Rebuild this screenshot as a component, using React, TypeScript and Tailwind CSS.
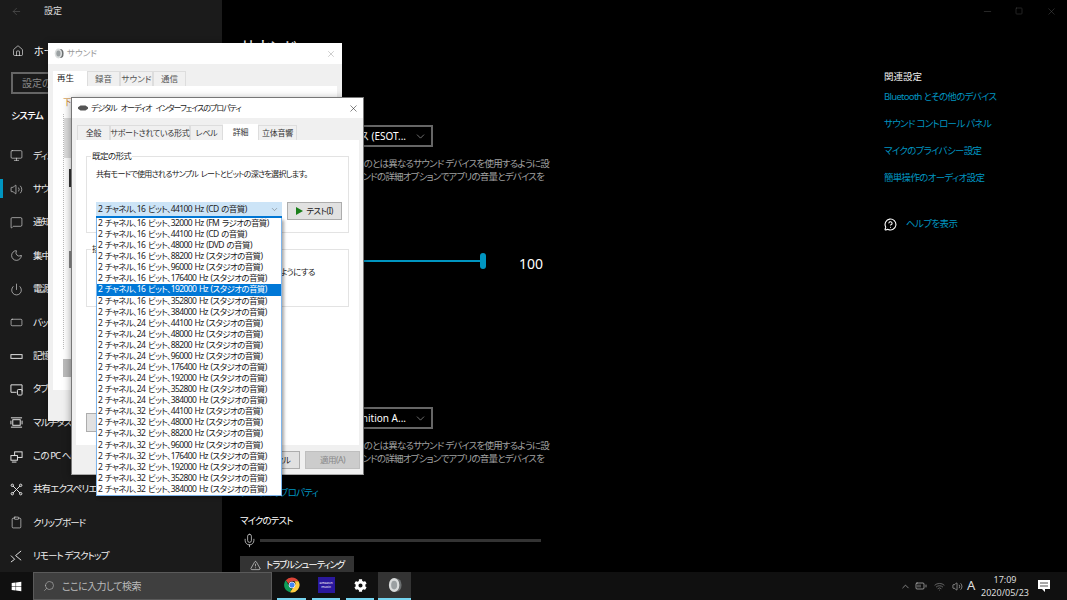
import {
  ArrowLeft,
  Home,
  Monitor,
  Volume2,
  MessageSquare,
  Moon,
  Power,
  RectangleHorizontal,
  Minus,
  Square,
  X,
  ChevronDown,
  Search,
  AlertTriangle,
  Mic,
  Clipboard,
  ChevronUp,
  Wifi,
  BatteryMedium,
  MessageCircleQuestion,
} from "lucide-react";
import { FaWindows, FaCog } from "react-icons/fa";

function StorageIcon({ className }: { className?: string }) {
  return (
    <svg viewBox="0 0 14 14" fill="none" stroke="currentColor" className={className}>
      <rect x="1" y="5" width="12" height="4" />
    </svg>
  );
}

function TabletIcon({ className }: { className?: string }) {
  return (
    <svg viewBox="0 0 14 14" fill="none" stroke="currentColor" className={className}>
      <path d="M13 9V2H1v8h6" />
      <rect x="8" y="7" width="5" height="6" rx="1" />
    </svg>
  );
}

function MultitaskIcon({ className }: { className?: string }) {
  return (
    <svg viewBox="0 0 14 14" fill="none" stroke="currentColor" className={className}>
      <rect x="3" y="4" width="8" height="6" />
      <path d="M1 2h12M1 12h12M1 5v4M13 5v4" />
    </svg>
  );
}

function ProjectIcon({ className }: { className?: string }) {
  return (
    <svg viewBox="0 0 14 14" fill="none" stroke="currentColor" className={className}>
      <rect x="5" y="2" width="8" height="6" />
      <rect x="1" y="6" width="7" height="5" fill="#1b1b1b" />
      <path d="M2 13h5" />
    </svg>
  );
}

function ShareIcon({ className }: { className?: string }) {
  return (
    <svg viewBox="0 0 14 14" fill="none" stroke="currentColor" className={className}>
      <path d="M3 3l8 8M11 3l-8 8" />
      <circle cx="2.500" cy="2.500" r="1.300" />
      <circle cx="11.500" cy="2.500" r="1.300" />
      <circle cx="2.500" cy="11.500" r="1.300" />
      <circle cx="11.500" cy="11.500" r="1.300" />
    </svg>
  );
}

function RemoteIcon({ className }: { className?: string }) {
  return (
    <svg viewBox="0 0 14 14" fill="none" stroke="currentColor" className={className}>
      <path d="M12 1 6 6l6 5" />
      <path d="M1 6l4 4-4 3" />
    </svg>
  );
}

const navItems = [
  { label: "ディスプレイ", icon: Monitor },
  { label: "サウンド", icon: Volume2, active: true },
  { label: "通知とアクション", icon: MessageSquare },
  { label: "集中モード", icon: Moon },
  { label: "電源とスリープ", icon: Power },
  { label: "バッテリー", icon: RectangleHorizontal },
  { label: "記憶域", icon: StorageIcon },
  { label: "タブレット", icon: TabletIcon },
  { label: "マルチタスク", icon: MultitaskIcon },
  { label: "この PC へのプロジェクション", icon: ProjectIcon },
  { label: "共有エクスペリエンス", icon: ShareIcon },
  { label: "クリップボード", icon: Clipboard },
  { label: "リモート デスクトップ", icon: RemoteIcon },
];

const relatedLinks = [
  "Bluetooth とその他のデバイス",
  "サウンド コントロール パネル",
  "マイクのプライバシー設定",
  "簡単操作のオーディオ設定",
];

const formats = [
  "2 チャネル、16 ビット、32000 Hz (FM ラジオの音質)",
  "2 チャネル、16 ビット、44100 Hz (CD の音質)",
  "2 チャネル、16 ビット、48000 Hz (DVD の音質)",
  "2 チャネル、16 ビット、88200 Hz (スタジオの音質)",
  "2 チャネル、16 ビット、96000 Hz (スタジオの音質)",
  "2 チャネル、16 ビット、176400 Hz (スタジオの音質)",
  "2 チャネル、16 ビット、192000 Hz (スタジオの音質)",
  "2 チャネル、16 ビット、352800 Hz (スタジオの音質)",
  "2 チャネル、16 ビット、384000 Hz (スタジオの音質)",
  "2 チャネル、24 ビット、44100 Hz (スタジオの音質)",
  "2 チャネル、24 ビット、48000 Hz (スタジオの音質)",
  "2 チャネル、24 ビット、88200 Hz (スタジオの音質)",
  "2 チャネル、24 ビット、96000 Hz (スタジオの音質)",
  "2 チャネル、24 ビット、176400 Hz (スタジオの音質)",
  "2 チャネル、24 ビット、192000 Hz (スタジオの音質)",
  "2 チャネル、24 ビット、352800 Hz (スタジオの音質)",
  "2 チャネル、24 ビット、384000 Hz (スタジオの音質)",
  "2 チャネル、32 ビット、44100 Hz (スタジオの音質)",
  "2 チャネル、32 ビット、48000 Hz (スタジオの音質)",
  "2 チャネル、32 ビット、88200 Hz (スタジオの音質)",
  "2 チャネル、32 ビット、96000 Hz (スタジオの音質)",
  "2 チャネル、32 ビット、176400 Hz (スタジオの音質)",
  "2 チャネル、32 ビット、192000 Hz (スタジオの音質)",
  "2 チャネル、32 ビット、352800 Hz (スタジオの音質)",
  "2 チャネル、32 ビット、384000 Hz (スタジオの音質)",
];

function Sidebar() {
  return (
    <aside className="w-[222px] shrink-0 bg-[#1b1b1b] text-white">
      <div className="flex h-[22px] items-center pl-[11px] gap-[22px]">
        <ArrowLeft className="h-[11px] w-[11px] text-[#555]" strokeWidth={1.5} />
        <span className="text-[9px] text-[#ddd]">設定</span>
      </div>
      <div className="mt-[18px] flex h-[22px] items-center pl-[12px] gap-[10px] text-[10px]">
        <Home className="h-[12px] w-[12px]" strokeWidth={1.2} />
        <span>ホーム</span>
      </div>
      <div className="ml-[11px] mt-[10px] flex h-[22px] w-[200px] items-center border-2 border-[#666] px-[9px] text-[10px] text-[#888]">
        設定の検索
      </div>
      <div className="ml-[11px] mt-[14px] h-[16px] text-[9.5px] font-medium leading-[16px] tracking-[-0.6px]">システム</div>
      <nav className="mt-[15px]">
        {navItems.map((item) => (
          <div key={item.label} className="relative flex h-[33.4px] items-center gap-[10px] pl-[10px] text-[9.5px] tracking-[-0.9px] whitespace-nowrap text-[#eee]">
            {item.active && <span className="absolute left-0 top-[7px] h-[19px] w-[3px] bg-[#0095c0]" />}
            <item.icon className="h-[13px] w-[13px] shrink-0" strokeWidth={1.1} />
            <span>{item.label}</span>
          </div>
        ))}
      </nav>
    </aside>
  );
}

function WideSelect({ label, className }: { label: string; className: string }) {
  return (
    <div className={`flex w-[193px] items-center justify-end border-2 border-[#666] pr-[4px] text-[10px] text-white ${className}`}>
      <span className="whitespace-nowrap">{label}</span>
      <ChevronDown className="ml-[8px] h-[13px] w-[13px] text-[#ccc]" strokeWidth={1} />
    </div>
  );
}

function Description({ first, second }: { first: string; second: string }) {
  return (
    <div className="mt-[10px] text-[9.5px] leading-[13px] tracking-[-0.8px] text-[#a0a0a0] whitespace-nowrap">
      <div className="flex w-[309px] justify-end">{first}</div>
      <div className="flex w-[304px] justify-end">{second}</div>
    </div>
  );
}

function MainPane() {
  return (
    <main className="flex flex-1 bg-black">
      <div className="w-[662px] shrink-0 pl-[18px]">
        <div className="h-[36px]" />
        <h1 className="h-[24px] text-[17px] leading-[24px] tracking-[-1px] text-white">サウンド</h1>
        <WideSelect label="デバイス (ESOT..." className="mt-[65px] h-[22px]" />
        <Description
          first="既定のものとは異なるサウンド デバイスを使用するように設"
          second="サウンドの詳細オプションでアプリの音量とデバイスを"
        />
        <div className="mt-[70px] flex h-[16px] items-center">
          <div className="relative h-[2px] w-[243px] bg-[#0095c0]">
            <span className="absolute right-[-3px] top-[-7px] h-[16px] w-[6px] rounded-[3px] bg-[#0095c0]" />
          </div>
          <span className="ml-[36px] mt-[4px] text-[14px] text-white">100</span>
        </div>
        <WideSelect label="High Definition A..." className="mt-[138px] h-[22px]" />
        <Description
          first="既定のものとは異なるサウンド デバイスを使用するように設"
          second="サウンドの詳細オプションでアプリの音量とデバイスを"
        />
        <div className="mt-[21px] h-[14px] text-[9.5px] leading-[14px] tracking-[-0.8px] text-[#0095c0]">デバイスのプロパティ</div>
        <div className="mt-[14px] h-[14px] text-[9.5px] leading-[14px] tracking-[-0.9px] text-white">マイクのテスト</div>
        <div className="mt-[3px] flex h-[18px] items-center">
          <Mic className="ml-[2px] h-[15px] w-[15px] text-[#ddd]" strokeWidth={1.2} />
          <div className="ml-[3px] h-[3px] w-[281px] bg-[#333]" />
        </div>
        <div className="mt-[7px] flex h-[18px] w-[114px] items-center gap-[5px] bg-[#333] pl-[10px] text-[9.5px] tracking-[-1.2px] text-white whitespace-nowrap">
          <AlertTriangle className="h-[11px] w-[11px] shrink-0" strokeWidth={1.2} />
          トラブルシューティング
        </div>
      </div>
      <div className="flex-1">
        <div className="flex h-[22px] items-center">
          <Minus className="ml-[97.500px] h-[11px] w-[11px] text-[#555]" strokeWidth={1} />
          <Square className="ml-[22.500px] h-[8px] w-[8px] text-[#555]" strokeWidth={1.2} />
          <X className="ml-[22.500px] h-[11px] w-[11px] text-[#555]" strokeWidth={1} />
        </div>
        <h2 className="mt-[47px] h-[16px] text-[9.5px] leading-[16px] text-[#eee]">関連設定</h2>
        <ul className="mt-[5px] flex flex-col gap-[13px] text-[9.5px] leading-[14px] tracking-[-0.7px] text-[#0095c0]">
          {relatedLinks.map((link) => (
            <li key={link}>{link}</li>
          ))}
        </ul>
        <div className="mt-[32px] flex items-center gap-[9px] text-[9.5px] tracking-[-0.6px] text-[#0095c0]">
          <MessageCircleQuestion className="h-[13px] w-[13px] text-white" strokeWidth={2} />
          ヘルプを表示
        </div>
      </div>
    </main>
  );
}

function SpeakerIcon({ className }: { className: string }) {
  return (
    <svg viewBox="0 0 16 18" className={className}>
      <ellipse cx="10" cy="9" rx="5.5" ry="7.5" fill="#6b6f70" />
      <ellipse cx="7" cy="9" rx="6" ry="8" fill="#d9dcdc" />
      <ellipse cx="7" cy="9" rx="3.4" ry="5" fill="#9aa0a2" />
    </svg>
  );
}

function SoundWindow() {
  const tabs = ["録音", "サウンド", "通信"];
  return (
    <section className="absolute left-[48px] top-[43px] h-[378px] w-[294px] bg-[#f0f0f0] shadow-[0_0_6px_rgba(0,0,0,0.35)]">
      <div className="flex h-[21px] items-center bg-white pl-[6px] text-[8.5px] text-[#999]">
        <SpeakerIcon className="mr-[3px] h-[11px] w-[10px]" />
        サウンド
        <X className="ml-auto mr-[6px] h-[10px] w-[10px] text-[#888]" strokeWidth={1} />
      </div>
      <div className="mt-[7px] flex pl-[5px] text-[8.5px] text-[#555]">
        <div className="flex h-[15px] w-[34px] items-center bg-white pl-[4px] text-[#222]">再生</div>
        {tabs.map((tab) => (
          <div key={tab} className="flex h-[15px] w-[33px] items-center justify-center border border-b-0 border-[#ddd]">
            {tab}
          </div>
        ))}
      </div>
      <div className="mx-[5px] h-[304px] bg-white pl-[10px] pt-[10px]">
        <div className="h-[12px] text-[8.5px] leading-[12px] text-[#c97a20]">下</div>
        <div className="mt-[6px] h-[235px] border-l border-dotted border-[#bbb] pt-[4px]">
          <div className="h-[40px] bg-[#ddd]" />
          <div className="ml-[5px] mt-[11px] h-[18px] bg-[#333]" />
          <div className="ml-[5px] mt-[64px] h-[17px] bg-[#888]" />
        </div>
        <div className="mt-[10px] h-[18px] w-[60px] bg-[#bbb]" />
      </div>
    </section>
  );
}

function GroupBox({ title, className, children }: { title: string; className: string; children: React.ReactNode }) {
  return (
    <div className={`relative border border-[#e3e3e3] ${className}`}>
      <span className="absolute left-[4px] top-[-6px] bg-white px-[1px] leading-[10px]">{title}</span>
      {children}
    </div>
  );
}

function PropertyWindow() {
  const tabs = [
    { label: "全般", w: "w-[33px]" },
    { label: "サポートされている形式", w: "w-[80px]" },
    { label: "レベル", w: "w-[33px]" },
  ];
  return (
    <section className="absolute left-[71px] top-[97px] h-[378px] w-[293px] border border-[#777] border-b-[#aaa] bg-[#f0f0f0] shadow-[0_2px_8px_rgba(0,0,0,0.4)]">
      <div className="flex h-[20px] items-center bg-white pl-[6px] text-[8px] tracking-[-1px] [word-spacing:3px] text-[#222] whitespace-nowrap">
        <svg viewBox="0 0 12 8" className="mr-[3px] h-[8px] w-[10px] shrink-0">
          <path d="M0 3 3 1h6l3 2v2L9 7H3L0 5z" fill="#555" />
        </svg>
        デジタル オーディオ インターフェイスのプロパティ
        <X className="ml-auto mr-[4px] h-[11px] w-[11px] text-[#222]" strokeWidth={1.2} />
      </div>
      <div className="mt-[6px] flex pl-[5px] text-[8px] tracking-[-0.3px] text-[#333]">
        {tabs.map((tab) => (
          <div key={tab.label} className={`mt-[1px] flex h-[15px] items-center justify-center border border-b-0 border-[#ddd] whitespace-nowrap ${tab.w}`}>
            {tab.label}
          </div>
        ))}
        <div className="flex h-[16px] w-[35px] items-center justify-center bg-white">詳細</div>
        <div className="mt-[1px] flex h-[15px] w-[39px] items-center justify-center border border-b-0 border-[#ddd] whitespace-nowrap">立体音響</div>
      </div>
      <div className="mx-[4px] h-[305px] bg-white px-[10px] pt-[16px] text-[8.5px] tracking-[-0.6px] [word-spacing:1px] text-[#222]">
        <GroupBox title="既定の形式" className="h-[77px] pl-[9px]">
          <p className="mt-[11px] text-[8px] leading-[12px] tracking-[-0.7px] whitespace-nowrap">共有モードで使用されるサンプル レートとビットの深さを選択します。</p>
          <div className="mt-[22px] flex items-start gap-[5px]">
            <div className="relative z-10 w-[186px]">
              <div className="flex h-[16px] items-center justify-between border-b-2 border-[#0078d7] bg-[#cce4f7] pl-[2px] pr-[3px] whitespace-nowrap">
                {formats[1]}
                <ChevronDown className="h-[9px] w-[9px] text-[#555]" strokeWidth={1.2} />
              </div>
              <ul className="absolute left-0 top-[16px] w-full border border-t-0 border-[#7eb4ea] bg-white shadow-[2px_2px_3px_rgba(0,0,0,0.35)]">
                {formats.map((format, i) => (
                  <li
                    key={format}
                    className={`h-[11.08px] pl-[1px] leading-[10px] whitespace-nowrap ${i === 6 ? "bg-[#0078d7] text-white" : ""}`}
                  >
                    {format}
                  </li>
                ))}
              </ul>
            </div>
            <button className="flex h-[18px] w-[55px] items-center justify-center gap-[3px] border border-[#adadad] bg-[#e1e1e1]">
              <span className="h-0 w-0 border-y-[4px] border-l-[7px] border-y-transparent border-l-[#1a7f1a]" />
              テスト(I)
            </button>
          </div>
        </GroupBox>
        <GroupBox title="排他モード" className="mt-[16px] h-[58px]">
          <p className="mt-[16px] pr-[33px] text-right leading-[12px] whitespace-nowrap">るようにする</p>
        </GroupBox>
        <button className="mt-[106px] block h-[19px] w-[70px] border border-[#adadad] bg-[#e1e1e1]">既定に戻す</button>
      </div>
      <div className="mr-[3px] mt-[6px] flex justify-end gap-[5px] text-[8.5px] tracking-[-0.55px]">
        <button className="h-[18px] w-[55px] border border-[#adadad] bg-[#e1e1e1] text-[#222]">キャンセル</button>
        <button className="h-[18px] w-[55px] border border-[#bfbfbf] bg-[#ccc] text-[#888]">適用(A)</button>
      </div>
    </section>
  );
}

function TaskbarApp({ children, className }: { children: React.ReactNode; className: string }) {
  return <div className={`flex h-full items-center justify-center border-b-2 border-[#76d5f0] ${className}`}>{children}</div>;
}

function Taskbar() {
  return (
    <footer className="flex h-[28px] shrink-0 items-center bg-[#101010] text-white">
      <div className="flex w-[33px] justify-center">
        <FaWindows className="h-[11px] w-[11px]" />
      </div>
      <div className="flex h-full w-[239px] items-center gap-[7px] border border-[#5a5a5a] bg-[#3f3f3f] pl-[9px] text-[10px] tracking-[-0.6px] text-[#bbb]">
        <Search className="h-[12px] w-[12px] -scale-x-100" strokeWidth={1.2} />
        ここに入力して検索
      </div>
      <div className="ml-[5px] flex h-full">
        <TaskbarApp className="w-[29px]">
          <svg viewBox="0 0 32 32" className="h-[16px] w-[16px]">
            <path d="M16 1a15 15 0 0 1 13 7.500H16a7.500 7.500 0 0 0-7 5L3.600 6.400A15 15 0 0 1 16 1z" fill="#db4437" />
            <path d="M3.600 6.400 9.800 17a7.500 7.500 0 0 0 6 6.400L12 30.500A15 15 0 0 1 3.600 6.400z" fill="#0f9d58" />
            <path d="M29 8.500A15 15 0 0 1 12 30.500l7.500-11a7.500 7.500 0 0 0 1.500-11z" fill="#ffcd40" />
            <circle cx="16" cy="16" r="6" fill="#4285f4" stroke="#fff" strokeWidth="1.500" />
          </svg>
        </TaskbarApp>
        <TaskbarApp className="ml-[6px] w-[28px]">
          <div className="flex h-[16px] w-[17px] flex-col items-center justify-center bg-[#2a189c] text-[3.5px] leading-[4px] text-white">
            <span>amazon</span>
            <span>music</span>
          </div>
        </TaskbarApp>
        <TaskbarApp className="ml-[6px] w-[28px]">
          <FaCog className="h-[13px] w-[13px]" />
        </TaskbarApp>
        <TaskbarApp className="ml-[4px] w-[33px] bg-[#333]">
          <SpeakerIcon className="h-[16px] w-[14px]" />
        </TaskbarApp>
      </div>
      <div className="ml-auto flex h-full items-center text-[#ddd]">
        <ChevronUp className="h-[11px] w-[11px]" strokeWidth={1.2} />
        <BatteryMedium className="ml-[4.500px] h-[12px] w-[12px]" strokeWidth={1.2} />
        <Wifi className="ml-[6.500px] h-[11px] w-[11px] text-[#888]" strokeWidth={1.5} />
        <Volume2 className="ml-[7px] h-[11px] w-[11px]" strokeWidth={1.2} />
        <span className="ml-[4.500px] w-[12px] text-[13px]">A</span>
        <div className="w-[52px] text-center text-[9px] leading-[13px]">
          <div>17:09</div>
          <div>2020/05/23</div>
        </div>
        <svg viewBox="0 0 12 12" className="ml-[7px] mr-[17px] h-[12px] w-[12px]">
          <path d="M0 0h12v9H7v3L4 9H0z" fill="#fff" />
          <path d="M2 3h8M2 6h8" stroke="#555" strokeWidth="1" />
        </svg>
      </div>
    </footer>
  );
}

export default function App() {
  return (
    <div className="relative flex h-[600px] w-[1067px] flex-col overflow-hidden bg-black font-['Noto_Sans','Noto_Sans_CJK_JP',sans-serif] [font-feature-settings:'palt']">
      <div className="flex h-[572px] overflow-hidden">
        <Sidebar />
        <MainPane />
      </div>
      <Taskbar />
      <SoundWindow />
      <PropertyWindow />
    </div>
  );
}
